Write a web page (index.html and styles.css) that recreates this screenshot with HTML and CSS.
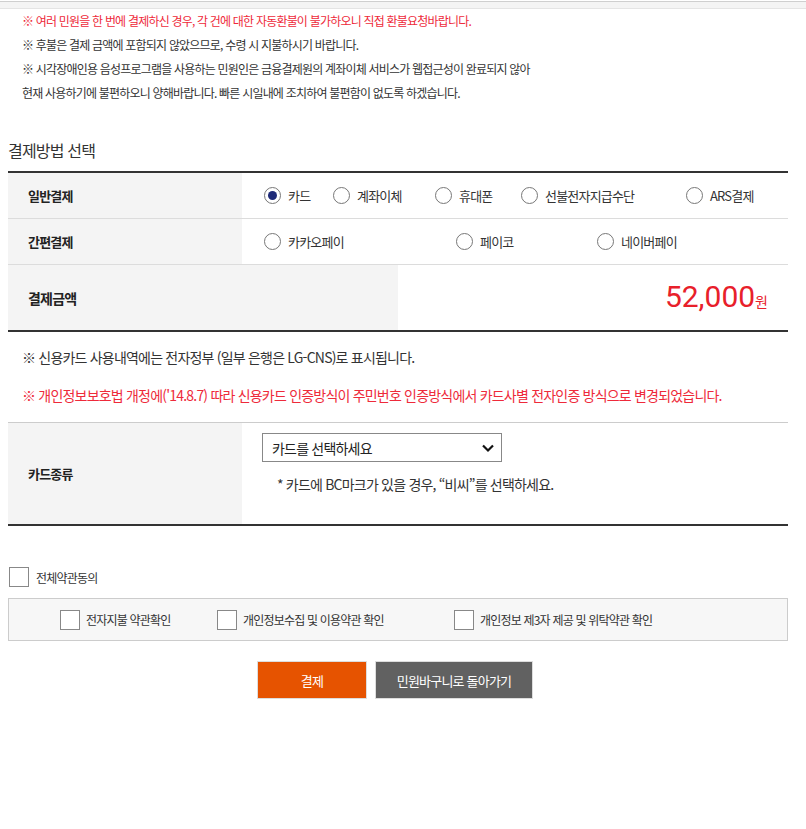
FILE: index.html
```html
<!DOCTYPE html>
<html lang="ko">
<head>
<meta charset="utf-8">
<title>결제방법 선택</title>
<link rel="stylesheet" href="styles.css">
</head>
<body>
<div class="topbar"></div>
<div class="page">
  <ul class="notices">
    <li class="red">※ 여러 민원을 한 번에 결제하신 경우, 각 건에 대한 자동환불이 불가하오니 직접 환불요청바랍니다.</li>
    <li>※ 후불은 결제 금액에 포함되지 않았으므로, 수령 시 지불하시기 바랍니다.</li>
    <li>※ 시각장애인용 음성프로그램을 사용하는 민원인은 금융결제원의 계좌이체 서비스가 웹접근성이 완료되지 않아</li>
    <li>현재 사용하기에 불편하오니 양해바랍니다. 빠른 시일내에 조치하여 불편함이 없도록 하겠습니다.</li>
  </ul>

  <h2 class="title">결제방법 선택</h2>

  <div class="paytable">
    <div class="row">
      <div class="label">일반결제</div>
      <div class="opts">
        <span class="opt w69"><span class="radio on"></span>카드</span>
        <span class="opt w102"><span class="radio"></span>계좌이체</span>
        <span class="opt w86"><span class="radio"></span>휴대폰</span>
        <span class="opt w165"><span class="radio"></span>선불전자지급수단</span>
        <span class="opt"><span class="radio"></span>ARS결제</span>
      </div>
    </div>
    <div class="row">
      <div class="label">간편결제</div>
      <div class="opts">
        <span class="opt w192"><span class="radio"></span>카카오페이</span>
        <span class="opt w141"><span class="radio"></span>페이코</span>
        <span class="opt"><span class="radio"></span>네이버페이</span>
      </div>
    </div>
    <div class="row amount-row">
      <div class="label wide">결제금액</div>
      <div class="amount"><span class="num">52,000</span><span class="won">원</span></div>
    </div>
  </div>

  <p class="info">※ 신용카드 사용내역에는 전자정부 (일부 은행은 LG-CNS)로 표시됩니다.</p>
  <p class="info red">※ 개인정보보호법 개정에('14.8.7) 따라 신용카드 인증방식이 주민번호 인증방식에서 카드사별 전자인증 방식으로 변경되었습니다.</p>

  <div class="cardtable">
    <div class="label">카드종류</div>
    <div class="cardcell">
      <div class="select">
        <span>카드를 선택하세요</span>
        <svg width="14" height="10" viewBox="0 0 14 10"><path d="M2 2.5 L7 7.5 L12 2.5" fill="none" stroke="#111" stroke-width="2.2"/></svg>
      </div>
      <p class="hint">* 카드에 BC마크가 있을 경우, “비씨”를 선택하세요.</p>
    </div>
  </div>

  <div class="allagree"><span class="cbox"></span>전체약관동의</div>

  <div class="agreebox">
    <span class="agree a1"><span class="cbox"></span>전자지불 약관확인</span>
    <span class="agree a2"><span class="cbox"></span>개인정보수집 및 이용약관 확인</span>
    <span class="agree"><span class="cbox"></span>개인정보 제3자 제공 및 위탁약관 확인</span>
  </div>

  <div class="buttons">
    <button class="btn pay">결제</button>
    <button class="btn back">민원바구니로 돌아가기</button>
  </div>
</div>
</body>
</html>
```

FILE: styles.css
```css
* { box-sizing: border-box; }
html, body { margin: 0; padding: 0; background: #fff; }
body {
  font-family: "Noto Sans CJK KR", "Noto Sans", sans-serif;
  color: #333;
  letter-spacing: -0.8px;
}
.topbar {
  margin-top: 1px;
  height: 8px;
  background: #f4f4f4;
  border-top: 1px solid #cfcfcf;
  border-bottom: 1px solid #e4e4e4;
}
.page { padding: 0 18px 0 8px; }
.notices {
  list-style: none;
  margin: 0;
  padding: 0 0 0 14px;
  font-size: 12px;
  line-height: 24px;
  color: #333;
}
.red { color: #ee2a3a; }
.title {
  margin: 33px 0 9px;
  font-size: 16px;
  font-weight: normal;
  line-height: 24px;
  color: #333;
}
.paytable {
  border-top: 2px solid #333;
  border-bottom: 2px solid #333;
}
.row {
  display: flex;
  height: 46px;
  border-bottom: 1px solid #dcdcdc;
}
.row.amount-row { height: 65px; border-bottom: none; }
.label {
  width: 234px;
  flex: none;
  background: #f4f4f4;
  display: flex;
  align-items: center;
  padding-left: 20px;
  font-size: 13px;
  font-weight: bold;
  color: #222;
}
.label.wide { width: 390px; font-size: 14px; }
.opts {
  display: flex;
  align-items: center;
  padding-left: 22px;
  font-size: 13px;
  color: #333;
}
.opt { display: inline-flex; align-items: center; }
.w69 { width: 69px; }
.w102 { width: 102px; }
.w86 { width: 86px; }
.w165 { width: 165px; }
.w192 { width: 192px; }
.w141 { width: 141px; }
.radio {
  width: 17px;
  height: 17px;
  border: 1px solid #777;
  border-radius: 50%;
  margin-right: 7px;
  display: inline-flex;
  align-items: center;
  justify-content: center;
  background: #fff;
}
.radio.on::after {
  content: "";
  width: 9px;
  height: 9px;
  border-radius: 50%;
  background: #1e2a78;
}
.amount {
  flex: 1;
  display: flex;
  justify-content: flex-end;
  align-items: baseline;
  padding: 14px 20px 0 0;
  color: #e8202a;
  font-family: "Roboto", "Noto Sans", sans-serif;
  letter-spacing: 0;
}
.num { font-size: 30px; }
.won { font-size: 14px; font-family: "Noto Sans CJK KR", sans-serif; }
.info {
  margin: 15px 0 0;
  padding-left: 14px;
  font-size: 14px;
  line-height: 20px;
}
.info.red { margin-top: 18px; }
.cardtable {
  margin-top: 17px;
  display: flex;
  border-top: 1px solid #ccc;
  border-bottom: 2px solid #333;
  height: 104px;
}
.cardcell { padding: 10px 0 0 20px; }
.select {
  width: 240px;
  height: 29px;
  border: 1px solid #888;
  display: flex;
  align-items: center;
  justify-content: space-between;
  padding: 0 6px 0 9px;
  font-size: 14px;
  color: #222;
}
.hint {
  margin: 12px 0 0 15px;
  font-size: 14px;
  line-height: 20px;
  color: #333;
}
.allagree {
  margin-top: 41px;
  display: flex;
  align-items: center;
  font-size: 12px;
  color: #333;
}
.allagree .cbox { margin-left: 1px; margin-right: 7px; }
.cbox {
  width: 20px;
  height: 20px;
  border: 1px solid #888;
  background: #fff;
  flex: none;
  margin-right: 6px;
}
.agreebox {
  margin-top: 11px;
  height: 43px;
  border: 1px solid #ccc;
  background: #f7f7f7;
  display: flex;
  align-items: center;
  padding-left: 51px;
  font-size: 12px;
  color: #333;
}
.agree { display: inline-flex; align-items: center; }
.a1 { width: 157px; }
.a2 { width: 237px; }
.buttons {
  margin-top: 20px;
  display: flex;
  justify-content: center;
  gap: 8px;
  padding-right: 6px;
}
.btn {
  height: 38px;
  border: 1px solid #ddd;
  color: #fff;
  font-family: inherit;
  font-size: 13px;
  letter-spacing: -0.8px;
}
.pay { width: 110px; background: #e65300; }
.back { width: 158px; background: #616161; }
```
